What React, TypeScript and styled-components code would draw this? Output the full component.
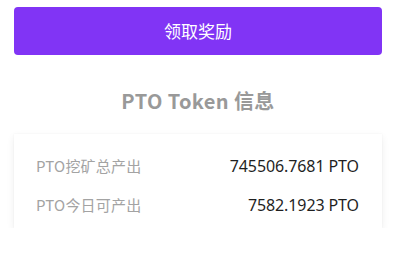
import React from "react";
import styled, { createGlobalStyle } from "styled-components";

const Global = createGlobalStyle`
  html, body { margin: 0; padding: 0; background: #ffffff; }
  body { font-family: "Noto Sans", "Noto Sans CJK SC", sans-serif; }
`;

const Page = styled.div`
  width: 398px;
  padding: 7px 16px 0 14px;
  box-sizing: border-box;
  display: flex;
  flex-direction: column;
`;

const ClaimButton = styled.button`
  height: 48px;
  width: 100%;
  border: none;
  border-radius: 4px;
  background: #8134f5;
  color: #ffffff;
  font-family: "Noto Sans CJK SC", sans-serif;
  font-size: 17px;
  font-weight: 400;
  display: flex;
  align-items: center;
  justify-content: center;
  padding: 0;
  padding-bottom: 1px;
`;

const Title = styled.h2`
  margin: 0;
  height: 79px;
  box-sizing: border-box;
  display: flex;
  align-items: center;
  justify-content: center;
  font-family: "Noto Sans CJK SC", sans-serif;
  font-weight: 700;
  font-size: 20px;
  color: #999999;
  letter-spacing: 0.4px;
  padding-top: 12px;
`;

const Card = styled.div`
  background: #ffffff;
  box-shadow: 0 3px 8px rgba(0, 0, 0, 0.07), 0 0 2px rgba(0, 0, 0, 0.04);
  padding: 12px 23px 4px 22px;
  display: flex;
  flex-direction: column;
`;

const Row = styled.div`
  height: 39px;
  display: flex;
  align-items: center;
  justify-content: space-between;
`;

const Label = styled.span`
  font-family: "Noto Sans CJK SC", sans-serif;
  font-size: 15px;
  color: #a3a3a3;
  letter-spacing: 0.2px;
`;

const Value = styled.span`
  font-family: "Noto Sans", "Noto Sans CJK SC", sans-serif;
  font-size: 16px;
  color: #1f1f1f;
  letter-spacing: -0.1px;
`;

const rows = [
  { label: "PTO挖矿总产出", value: "745506.7681 PTO" },
  { label: "PTO今日可产出", value: "7582.1923 PTO" },
];

export default function App() {
  return (
    <>
      <Global />
      <Page>
        <ClaimButton>领取奖励</ClaimButton>
        <Title>PTO Token 信息</Title>
        <Card>
          {rows.map((r) => (
            <Row key={r.label}>
              <Label>{r.label}</Label>
              <Value>{r.value}</Value>
            </Row>
          ))}
        </Card>
      </Page>
    </>
  );
}
